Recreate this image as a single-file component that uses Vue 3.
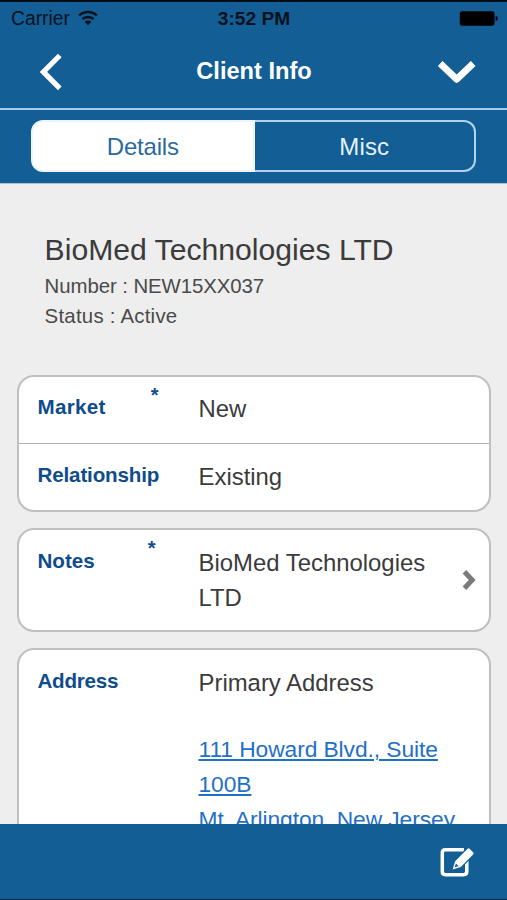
<script setup>
import { ref } from 'vue'

const tabs = ['Details', 'Misc']
const active = ref('Details')
const addressLines = ['111 Howard Blvd., Suite 100B', 'Mt. Arlington, New Jersey']
</script>

<template>
  <div class="screen">
    <header class="top">
      <div class="status">
        <div class="carrier">
          <span>Carrier</span>
          <svg class="wifi" width="20" height="16" viewBox="0 0 20 16">
            <g fill="none" stroke="currentColor" stroke-width="2.5">
              <path d="M1.2 5.6a12.6 12.6 0 0 1 17.6 0" />
              <path d="M4.4 9.2a8 8 0 0 1 11.2 0" />
            </g>
            <path d="M6.7 11.8a4.7 4.7 0 0 1 6.6 0L10 15.3z" fill="currentColor" />
          </svg>
        </div>
        <span class="time">3:52 PM</span>
        <svg class="battery" width="39" height="15" viewBox="0 0 39 15">
          <rect x="0.8" y="0.2" width="34.7" height="14.6" rx="2.4" />
          <path d="M36.6 4.8q2.2.6 2.2 2.7t-2.2 2.7z" />
        </svg>
      </div>
      <nav class="nav">
        <svg class="back" width="24" height="38" viewBox="0 0 24 38" fill="none">
          <path d="M21.8 2.5 5.4 18.9 21.8 35.3" stroke="#fff" stroke-width="5.2" />
        </svg>
        <h1>Client Info</h1>
        <svg class="menu" width="40" height="26" viewBox="0 0 40 26" fill="none">
          <path d="M3.2 4.5 19.7 20.3 36.2 4.5" stroke="#fff" stroke-width="6.8" stroke-linejoin="round" />
        </svg>
      </nav>
    </header>

    <div class="tabbar">
      <div class="tabs">
        <button
          v-for="t in tabs"
          :key="t"
          class="tab"
          :class="{ active: t === active }"
          @click="active = t"
        >{{ t }}</button>
      </div>
    </div>

    <main class="content">
      <section class="summary">
        <h2>BioMed Technologies LTD</h2>
        <p class="number">Number : NEW15XX037</p>
        <p class="state">Status : Active</p>
      </section>

      <section class="card">
        <div class="row">
          <div class="label"><span class="market">Market</span><span class="star">*</span></div>
          <div class="value">New</div>
        </div>
        <div class="row">
          <div class="label"><span class="relationship">Relationship</span></div>
          <div class="value">Existing</div>
        </div>
      </section>

      <section class="card">
        <div class="row">
          <div class="label"><span>Notes</span><span class="star near">*</span></div>
          <div class="value">BioMed Technologies LTD</div>
          <svg class="more" width="16" height="22" viewBox="0 0 16 22" fill="none">
            <path d="M3.4 2.8 11.2 11 3.4 19.2" stroke="#7b7b7b" stroke-width="5" />
          </svg>
        </div>
      </section>

      <section class="card">
        <div class="row">
          <div class="label"><span class="addr">Address</span></div>
          <div class="value">
            Primary Address
            <a class="address"><span v-for="l in addressLines" :key="l">{{ l }}</span></a>
          </div>
        </div>
      </section>
    </main>

    <footer class="bottom">
      <svg class="edit" width="36" height="32" viewBox="0 0 36 32" fill="none">
        <path
          d="M26 3.7H7.4Q4.3 3.7 4.3 6.8v18.8q0 3.1 3.1 3.1h18.3q3.1 0 3.1-3.1V15"
          stroke="#fff"
          stroke-width="3.5"
        />
        <path d="M14.6 24 16.5 14.3 30.2 0.6 37.6 7.9 23.9 21.4z" fill="#125e95" />
        <path d="M14.6 23.4 17.1 15.2 29.6 2.8Q30.7 1.8 31.8 2.9L35.1 6.2Q36.2 7.3 35.1 8.4L22.8 20.9z" fill="#fff" />
        <path d="M16.6 21.4 17.9 17.5 20.6 20.1z" fill="#125e95" />
      </svg>
    </footer>
  </div>
</template>

<style>
body {
  margin: 0;
  overflow: hidden;
}
</style>

<style scoped>
.screen {
  display: flex;
  flex-direction: column;
  width: 507px;
  height: 900px;
  overflow: hidden;
  background: #eee;
  color: #3b3b3b;
  font-family: "Liberation Sans", Arial, sans-serif;
}
h1, h2, p {
  margin: 0;
  font-weight: normal;
}
svg {
  display: block;
  flex: none;
}
.top {
  box-sizing: border-box;
  flex: none;
  height: 110px;
  background: #125e95;
  border-top: 2px solid #020d16;
  border-bottom: 2px solid #a6cdec;
}
.status {
  display: grid;
  grid-template-columns: 1fr auto 1fr;
  align-items: center;
  box-sizing: border-box;
  height: 33px;
  padding: 1px 9px 0 11px;
  color: #05121d;
  font-size: 19.3px;
}
.carrier {
  display: flex;
  align-items: center;
  gap: 8px;
}
.wifi {
  margin-top: -2px;
}
.time {
  margin-left: -1px;
  font-weight: bold;
  font-size: 19.2px;
}
.battery {
  justify-self: end;
  margin-top: -1px;
  fill: #000;
}
.nav {
  display: flex;
  align-items: center;
  justify-content: space-between;
  height: 73px;
  padding: 0 30px 0 38px;
  color: #fff;
}
.nav h1 {
  padding: 0 0 1px 9px;
  font-size: 23.6px;
  font-weight: bold;
}
.tabbar {
  box-sizing: border-box;
  flex: none;
  height: 74px;
  padding: 10px 31px 0;
  background: #125e95;
  border-bottom: 1px solid #a6c3d8;
}
.tabs {
  display: flex;
  height: 52px;
}
.tab {
  box-sizing: border-box;
  flex: 1;
  border: 2px solid #b2d3ec;
  border-left: 0;
  border-radius: 0 12px 12px 0;
  padding: 2px 0 0 0;
  background: transparent;
  color: #e4f3ff;
  font: 24px "Liberation Sans", Arial, sans-serif;
  letter-spacing: 0.2px;
}
.tab:first-child {
  border-left: 2px solid #b2d3ec;
  border-radius: 12px 0 0 12px;
}
.tab.active {
  border-color: #eaf5fd;
  background: #fff;
  color: #2a6a9e;
  letter-spacing: -0.2px;
}
.content {
  flex: 1;
  min-height: 0;
  padding: 0 16px 0 17px;
  overflow: hidden;
}
.summary {
  height: 146px;
  padding: 45px 0 0 27.6px;
}
.summary h2 {
  font-size: 30.15px;
  line-height: 42px;
}
.summary p {
  font-size: 20.4px;
  line-height: 30px;
  color: #4a4a4a;
}
.summary .number {
  letter-spacing: -0.08px;
}
.summary .state {
  letter-spacing: 0.24px;
}
.card {
  margin-bottom: 16px;
  background: #fff;
  border: 2px solid #bfbfbf;
  border-radius: 17px;
}
.row {
  display: flex;
  box-sizing: border-box;
  min-height: 66px;
  padding: 15px 12px 15px 18.5px;
}
.card > .row:first-child:not(:last-child) {
  padding-top: 14px;
}
.row + .row {
  border-top: 1px solid #b0b0b0;
  min-height: 67px;
}
.label {
  display: flex;
  flex: none;
  justify-content: space-between;
  width: 161px;
  color: #0f4c8c;
  font-size: 20.6px;
  font-weight: bold;
  line-height: 31px;
}
.market {
  letter-spacing: 0.3px;
}
.relationship {
  letter-spacing: -0.15px;
}
.addr {
  letter-spacing: -0.25px;
}
.star {
  margin: -6px 40px 0 0;
  font-size: 20px;
  line-height: 20px;
}
.star.near {
  margin: -7px 43px 0 0;
}
.value {
  flex: 1;
  font-size: 23.9px;
  line-height: 35px;
}
.more {
  align-self: center;
}
.address {
  display: block;
  margin-top: 32px;
  color: #1f70c9;
  font-size: 22.8px;
  letter-spacing: -0.08px;
  text-decoration: underline;
  text-decoration-thickness: 1.5px;
  text-underline-offset: 2px;
}
.address span {
  display: block;
}
.bottom {
  box-sizing: border-box;
  display: flex;
  align-items: center;
  justify-content: flex-end;
  flex: none;
  height: 76px;
  padding-right: 33px;
  background: #125e95;
  border-bottom: 1px solid #06263f;
}
</style>
